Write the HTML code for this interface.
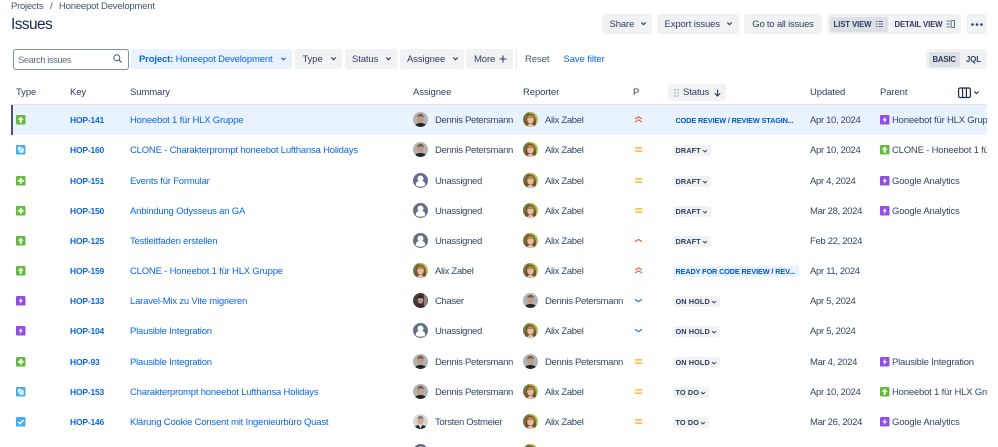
<!DOCTYPE html>
<html><head><meta charset="utf-8"><style>
html,body{margin:0;padding:0;background:#fff}
#p{position:relative;width:998px;height:447px;overflow:hidden;background:#fff;font-family:"Liberation Sans",sans-serif;font-size:9.5px;color:#344563}
#p *{box-sizing:border-box}
.a{position:absolute;white-space:nowrap}
.btn{position:absolute;height:20px;background:#f1f2f4;border-radius:3px;color:#2c3e5d;line-height:21px;font-size:9.5px;white-space:nowrap;letter-spacing:-.12px}
.th{position:absolute;top:87px;line-height:12px;font-size:9.5px;color:#2c3e5d;letter-spacing:-.1px}
.r{position:absolute;left:12px;width:975px;height:30px}
.r>*{position:absolute}
.t{left:4px;top:10px;width:9.5px;height:9.5px}
.k{left:58px;top:9px;line-height:12px;font-size:8.5px;font-weight:bold;color:#0c66e4;white-space:nowrap;letter-spacing:-.2px}
.s{left:118px;top:10px;line-height:12px;color:#0c66e4;white-space:nowrap;font-size:9.5px;letter-spacing:-.2px}
.av1{left:401px;top:7px;width:15px;height:15px}
.n1{left:423px;top:10px;line-height:12px;white-space:nowrap;letter-spacing:-.32px}
.av2{left:511px;top:7px;width:15px;height:15px}
.n2{left:533px;top:10px;line-height:12px;white-space:nowrap;letter-spacing:-.32px}
.pr{left:622px;top:10px;width:9px;height:9px}
.st{left:661px;top:10px;height:11px;line-height:11.5px;padding:0 2.5px;background:#f1f2f4;border-radius:2px;font-size:7.3px;font-weight:bold;color:#2c3e5d;white-space:nowrap;letter-spacing:.1px}
.st svg{display:inline-block;width:6px;height:6px;margin-left:1.5px;vertical-align:-.5px}
.st.b{background:#e9f2ff;color:#0055cc;width:126px;letter-spacing:-.13px}
.u{left:798px;top:10px;line-height:12px;white-space:nowrap;letter-spacing:-.33px}
.pi{left:868px;top:10px;width:9.5px;height:9.5px}
.pt{left:880px;top:10px;width:95px;overflow:hidden;line-height:12px;white-space:nowrap;letter-spacing:-.2px}
</style></head><body><div id="p">
<svg width="0" height="0" style="position:absolute">
<defs>
<symbol id="story" viewBox="0 0 9 9"><rect width="9" height="9" rx="1.2" fill="#63ba3c"/><path d="M4.5 1.5 7.400 4.500H5.500V7.400H3.500V4.500H1.600z" fill="#fff"/></symbol>
<symbol id="plus" viewBox="0 0 9 9"><rect width="9" height="9" rx="1.2" fill="#63ba3c"/><path d="M3.600 1.800h1.800v1.800h1.800v1.800H5.400v1.800H3.600V5.400H1.800V3.600h1.800z" fill="#fff"/></symbol>
<symbol id="clone" viewBox="0 0 9 9"><rect width="9" height="9" rx="1.2" fill="#4bade8"/><path d="M1.800 1.800h3.200v1.200h2.200V7.200H3.200V5.200H1.800z" fill="#fff"/><path d="M3.400 3.200h2.200v2.200H3.400z" fill="#a6d8f5"/></symbol>
<symbol id="epic" viewBox="0 0 9 9"><rect width="9" height="9" rx="1.2" fill="#904ee2"/><path d="M5.400 1.300 2.300 5h2L3.600 7.700 6.700 4H4.700z" fill="#fff"/></symbol>
<symbol id="task" viewBox="0 0 9 9"><rect width="9" height="9" rx="1.2" fill="#4bade8"/><path d="M2 4.600 3.800 6.400 7.100 2.800" fill="none" stroke="#fff" stroke-width="1.4"/></symbol>
<symbol id="high2" viewBox="0 0 9 9"><path d="M1 4 4.500 1.800 8 4M1 7 4.500 4.800 8 7" fill="none" stroke="#f15b3a" stroke-width="1.1"/></symbol>
<symbol id="high" viewBox="0 0 9 9"><path d="M1 5.600 4.500 3.400 8 5.600" fill="none" stroke="#f15b3a" stroke-width="1.2"/></symbol>
<symbol id="med" viewBox="0 0 9 9"><path d="M1.200 2.900h7M1.200 6.100h7" stroke="#ffab00" stroke-width="1.2"/></symbol>
<symbol id="low" viewBox="0 0 9 9"><path d="M1 3.400 4.500 5.600 8 3.400" fill="none" stroke="#2684ff" stroke-width="1.3"/></symbol>
<symbol id="dn" viewBox="0 0 8 8"><path d="M1.500 2.800 4 5.300 6.500 2.800" fill="none" stroke="#2c3e5d" stroke-width="1.300"/></symbol>
<clipPath id="c"><circle cx="7.500" cy="7.500" r="7.500"/></clipPath>
<symbol id="dp" viewBox="0 0 15 15"><g clip-path="url(#c)"><rect width="15" height="15" fill="#b2b2b0"/><path d="M1.500 15c.5-3 3-4 6-4s5.500 1 6 4z" fill="#20242c"/><ellipse cx="7.500" cy="6.500" rx="3.300" ry="4.200" fill="#c39a85"/><path d="M4.300 5.200C4.300 2.800 6 2 7.800 2s2.900 1.200 2.900 3.200C9.500 4 6 4.100 4.300 5.200z" fill="#6b5c52"/></g></symbol>
<symbol id="az" viewBox="0 0 15 15"><g clip-path="url(#c)"><rect width="15" height="15" fill="#a7bd45"/><path d="M0 0h6v15H0z" fill="#6f7a45"/><path d="M2.200 15C1.200 8 3 1.500 7.500 1.500S13.800 8 12.800 15z" fill="#7a5530"/><ellipse cx="7.500" cy="7.500" rx="3.300" ry="4.200" fill="#e6bda3"/><path d="M4.300 7C4.300 4 6 3 8 3s3 1.800 3 3.700C9 6 6.500 5.500 4.300 7z" fill="#b48a52"/><path d="M4 15c.6-2.500 2-3 3.500-3s3 .5 3.500 3z" fill="#e0c3ad"/></g></symbol>
<symbol id="ua" viewBox="0 0 15 15"><circle cx="7.500" cy="7.500" r="7.500" fill="#626f86"/><circle cx="7.500" cy="5.500" r="3" fill="#fff"/><path d="M2.800 12.300c0-3 1.500-4.200 3-4.200h3.400c1.500 0 3 1.200 3 4.200-1.200 1.100-2.900 1.500-4.700 1.500s-3.500-.4-4.700-1.500z" fill="#fff"/></symbol>
<symbol id="ch" viewBox="0 0 15 15"><g clip-path="url(#c)"><rect width="15" height="15" fill="#4a3a38"/><rect x="11" width="4" height="15" fill="#8d7f7c"/><path d="M3 15c0-3 2-4 4.500-4s4.500 1 4.500 4z" fill="#372d2e"/><ellipse cx="7.500" cy="6.800" rx="2.800" ry="3.800" fill="#b89488"/><path d="M4.500 6C4.500 3 6 2 7.500 2s3 1 3 4C9 4.500 6 4.500 4.500 6z" fill="#2e2323"/></g></symbol>
<symbol id="to" viewBox="0 0 15 15"><g clip-path="url(#c)"><rect width="15" height="15" fill="#d6d6d5"/><path d="M1 15c.5-3 3-4 6.500-4s6 1 6.500 4z" fill="#23262e"/><path d="M6 11h3l-1.500 3.500z" fill="#fff"/><ellipse cx="7.500" cy="6.500" rx="3" ry="4" fill="#d2a690"/><path d="M4.500 5.300C4.500 2.800 6 2 7.600 2s3 1 2.900 3.300C9 4 6 4.200 4.500 5.300z" fill="#7d7572"/></g></symbol>
</defs>
</svg>

<div class="a" style="left:11px;top:1px;line-height:12px;font-size:9.500px;color:#44546f;letter-spacing:-.25px">Projects</div>
<div class="a" style="left:50px;top:1px;line-height:12px;color:#44546f">/</div>
<div class="a" style="left:59px;top:1px;line-height:12px;color:#44546f;letter-spacing:-.2px">Honeepot Development</div>
<div class="a" style="left:11px;top:15px;line-height:20px;font-size:15.500px;color:#172b4d;letter-spacing:-.6px">Issues</div>

<div class="btn" style="left:602px;top:14px;width:50px;padding-left:7.500px">Share<svg class="a" style="left:37.500px;top:6px;width:7px;height:7px"><use href="#dn"/></svg></div>
<div class="btn" style="left:657px;top:14px;width:82px;padding-left:7.500px">Export issues<svg class="a" style="left:69px;top:6px;width:7px;height:7px"><use href="#dn"/></svg></div>
<div class="btn" style="left:744px;top:14px;width:78px;text-align:center;letter-spacing:-.22px">Go to all issues</div>
<div class="btn" style="left:827px;top:14px;width:134px"></div>
<div class="a" style="left:830px;top:16.500px;width:58px;height:15px;background:#dcdfe4;border-radius:2px"></div>
<div class="a" style="left:833.500px;top:18.500px;line-height:12px;font-size:7.800px;font-weight:bold;color:#2c3e5d;letter-spacing:-.12px">LIST VIEW</div>
<svg class="a" style="left:876px;top:21px" width="7" height="6"><path d="M0 .5h1.500M2.500 .5H7M0 3h1.500M2.500 3H7M0 5.500h1.500M2.500 5.500H7" stroke="#5e6c84" stroke-width="1"/></svg>
<div class="a" style="left:894.500px;top:18.500px;line-height:12px;font-size:7.800px;font-weight:bold;color:#2c3e5d;letter-spacing:-.15px">DETAIL VIEW</div>
<svg class="a" style="left:946px;top:20px" width="9" height="8"><path d="M.5 1h3M.5 4h3M.5 7h3" stroke="#5e6c84"/><rect x="5" y=".5" width="3.500" height="7" rx="1" fill="none" stroke="#5e6c84"/></svg>
<div class="btn" style="left:966px;top:14px;width:21px"><svg class="a" style="left:4.500px;top:8.500px" width="12" height="3"><circle cx="1.500" cy="1.500" r="1.300" fill="#2c3e5d"/><circle cx="6" cy="1.500" r="1.300" fill="#2c3e5d"/><circle cx="10.500" cy="1.500" r="1.300" fill="#2c3e5d"/></svg></div>

<div class="a" style="left:13px;top:49px;width:116px;height:21px;border:1px solid #8590a2;border-radius:3px;background:#fff;line-height:21px;padding-left:4px;color:#626f86;font-size:9.500px;letter-spacing:-.5px">Search issues</div>
<svg class="a" style="left:113px;top:54px" width="9" height="9" viewBox="0 0 9 9"><circle cx="3.800" cy="3.800" r="3" fill="none" stroke="#44546f" stroke-width="1"/><path d="M6 6l2.500 2.500" stroke="#44546f" stroke-width="1.100"/></svg>
<div class="btn" style="left:131px;top:49px;width:161px;background:#e9f2ff;color:#0c66e4;padding-left:8px;letter-spacing:-.15px"><b>Project:</b> Honeepot Development<svg class="a" style="left:149px;top:6px;width:7px;height:7px"><path d="M1.500 2.800 3.500 4.800 5.500 2.800" fill="none" stroke="#0c66e4" stroke-width="1.100"/></svg></div>
<div class="btn" style="left:295px;top:49px;width:47px;padding-left:7.500px">Type<svg class="a" style="left:34.500px;top:6px;width:7px;height:7px"><use href="#dn"/></svg></div>
<div class="btn" style="left:345px;top:49px;width:52px;padding-left:7px">Status<svg class="a" style="left:39.500px;top:6px;width:7px;height:7px"><use href="#dn"/></svg></div>
<div class="btn" style="left:400px;top:49px;width:64px;padding-left:7px">Assignee<svg class="a" style="left:51.500px;top:6px;width:7px;height:7px"><use href="#dn"/></svg></div>
<div class="btn" style="left:466px;top:49px;width:47px;padding-left:8px">More<svg class="a" style="left:33px;top:6px;width:8px;height:8px"><path d="M4 .5v7M.5 4h7" stroke="#2c3e5d" stroke-width="1.100"/></svg></div>
<div class="a" style="left:516px;top:49px;width:1px;height:20px;background:#ebecf0"></div>
<div class="a" style="left:525px;top:53.500px;line-height:12px;color:#44546f;letter-spacing:-.1px">Reset</div>
<div class="a" style="left:563.500px;top:53.500px;line-height:12px;color:#0c66e4;letter-spacing:-.1px">Save filter</div>
<div class="btn" style="left:926px;top:49px;width:61px"></div>
<div class="a" style="left:929px;top:52px;width:31px;height:15px;background:#dcdfe4;border-radius:2px"></div>
<div class="a" style="left:932.500px;top:53.500px;line-height:12px;font-size:7.800px;font-weight:bold;color:#2c3e5d;letter-spacing:-.2px">BASIC</div>
<div class="a" style="left:966px;top:53.500px;line-height:12px;font-size:7.800px;font-weight:bold;color:#2c3e5d;letter-spacing:-.1px">JQL</div>

<div class="th" style="left:16px">Type</div>
<div class="th" style="left:70px">Key</div>
<div class="th" style="left:130px">Summary</div>
<div class="th" style="left:413px">Assignee</div>
<div class="th" style="left:523px">Reporter</div>
<div class="th" style="left:633px">P</div>
<div class="a" style="left:668px;top:84px;width:58px;height:17px;background:#f1f2f4;border-radius:3px"></div>
<svg class="a" style="left:673.500px;top:89px" width="5" height="8"><g fill="#8590a2"><circle cx="1" cy="1" r=".7"/><circle cx="4" cy="1" r=".7"/><circle cx="1" cy="4" r=".7"/><circle cx="4" cy="4" r=".7"/><circle cx="1" cy="7" r=".7"/><circle cx="4" cy="7" r=".7"/></g></svg>
<div class="th" style="left:683px">Status</div>
<svg class="a" style="left:714px;top:89px" width="7" height="8"><path d="M3.500 .5v6.500M.8 4.300 3.500 7 6.200 4.300" fill="none" stroke="#2c3e5d" stroke-width="1.100"/></svg>
<div class="th" style="left:810px">Updated</div>
<div class="th" style="left:880px">Parent</div>
<svg class="a" style="left:958px;top:87px" width="13" height="12"><rect x=".6" y="1" width="11.800" height="9.500" rx="1.500" fill="none" stroke="#172b4d" stroke-width="1.200"/><path d="M4.600 1v9.500M8.400 1v9.500" stroke="#172b4d" stroke-width="1.200"/></svg>
<svg class="a" style="left:973px;top:89px;width:7px;height:7px"><use href="#dn"/></svg>

<div class="a" style="left:11px;top:104px;width:976px;height:1px;background:#dfe1e6"></div>
<div class="a" style="left:12px;top:105px;width:975px;height:30px;background:#e9f2ff"></div>
<div class="a" style="left:11px;top:105px;width:1.500px;height:30px;background:#44546f"></div>

<div class="r" style="top:105px"><svg class="t"><use href="#story"/></svg><div class="k">HOP-141</div><div class="s">Honeebot 1 für HLX Gruppe</div><svg class="av1"><use href="#dp"/></svg><div class="n1">Dennis Petersmann</div><svg class="av2"><use href="#az"/></svg><div class="n2">Alix Zabel</div><svg class="pr"><use href="#high2"/></svg><div class="st b" style="background:transparent">CODE REVIEW / REVIEW STAGIN...</div><div class="u">Apr 10, 2024</div><svg class="pi"><use href="#epic"/></svg><div class="pt">Honeebot für HLX Gruppe</div></div>

<div class="r" style="top:135px"><svg class="t"><use href="#clone"/></svg><div class="k">HOP-160</div><div class="s">CLONE - Charakterprompt honeebot Lufthansa Holidays</div><svg class="av1"><use href="#dp"/></svg><div class="n1">Dennis Petersmann</div><svg class="av2"><use href="#az"/></svg><div class="n2">Alix Zabel</div><svg class="pr"><use href="#med"/></svg><div class="st">DRAFT<svg><use href="#dn"/></svg></div><div class="u">Apr 10, 2024</div><svg class="pi"><use href="#story"/></svg><div class="pt">CLONE - Honeebot 1 für HLX Gruppe</div></div>

<div class="r" style="top:166px"><svg class="t"><use href="#plus"/></svg><div class="k">HOP-151</div><div class="s">Events für Formular</div><svg class="av1"><use href="#ua"/></svg><div class="n1">Unassigned</div><svg class="av2"><use href="#az"/></svg><div class="n2">Alix Zabel</div><svg class="pr"><use href="#med"/></svg><div class="st">DRAFT<svg><use href="#dn"/></svg></div><div class="u">Apr 4, 2024</div><svg class="pi"><use href="#epic"/></svg><div class="pt">Google Analytics</div></div>

<div class="r" style="top:196px"><svg class="t"><use href="#plus"/></svg><div class="k">HOP-150</div><div class="s">Anbindung Odysseus an GA</div><svg class="av1"><use href="#ua"/></svg><div class="n1">Unassigned</div><svg class="av2"><use href="#az"/></svg><div class="n2">Alix Zabel</div><svg class="pr"><use href="#med"/></svg><div class="st">DRAFT<svg><use href="#dn"/></svg></div><div class="u">Mar 28, 2024</div><svg class="pi"><use href="#epic"/></svg><div class="pt">Google Analytics</div></div>

<div class="r" style="top:226px"><svg class="t"><use href="#story"/></svg><div class="k">HOP-125</div><div class="s">Testleitfaden erstellen</div><svg class="av1"><use href="#ua"/></svg><div class="n1">Unassigned</div><svg class="av2"><use href="#az"/></svg><div class="n2">Alix Zabel</div><svg class="pr"><use href="#high"/></svg><div class="st">DRAFT<svg><use href="#dn"/></svg></div><div class="u">Feb 22, 2024</div></div>

<div class="r" style="top:256px"><svg class="t"><use href="#story"/></svg><div class="k">HOP-159</div><div class="s">CLONE - Honeebot 1 für HLX Gruppe</div><svg class="av1"><use href="#az"/></svg><div class="n1">Alix Zabel</div><svg class="av2"><use href="#az"/></svg><div class="n2">Alix Zabel</div><svg class="pr"><use href="#high2"/></svg><div class="st b">READY FOR CODE REVIEW / REV...</div><div class="u">Apr 11, 2024</div></div>

<div class="r" style="top:286px"><svg class="t"><use href="#epic"/></svg><div class="k">HOP-133</div><div class="s">Laravel-Mix zu Vite migrieren</div><svg class="av1"><use href="#ch"/></svg><div class="n1">Chaser</div><svg class="av2"><use href="#dp"/></svg><div class="n2">Dennis Petersmann</div><svg class="pr"><use href="#low"/></svg><div class="st">ON HOLD<svg><use href="#dn"/></svg></div><div class="u">Apr 5, 2024</div></div>

<div class="r" style="top:316px"><svg class="t"><use href="#epic"/></svg><div class="k">HOP-104</div><div class="s">Plausible Integration</div><svg class="av1"><use href="#ua"/></svg><div class="n1">Unassigned</div><svg class="av2"><use href="#az"/></svg><div class="n2">Alix Zabel</div><svg class="pr"><use href="#low"/></svg><div class="st">ON HOLD<svg><use href="#dn"/></svg></div><div class="u">Apr 5, 2024</div></div>

<div class="r" style="top:347px"><svg class="t"><use href="#plus"/></svg><div class="k">HOP-93</div><div class="s">Plausible Integration</div><svg class="av1"><use href="#dp"/></svg><div class="n1">Dennis Petersmann</div><svg class="av2"><use href="#dp"/></svg><div class="n2">Dennis Petersmann</div><svg class="pr"><use href="#med"/></svg><div class="st">ON HOLD<svg><use href="#dn"/></svg></div><div class="u">Mar 4, 2024</div><svg class="pi"><use href="#epic"/></svg><div class="pt">Plausible Integration</div></div>

<div class="r" style="top:377px"><svg class="t"><use href="#clone"/></svg><div class="k">HOP-153</div><div class="s">Charakterprompt honeebot Lufthansa Holidays</div><svg class="av1"><use href="#dp"/></svg><div class="n1">Dennis Petersmann</div><svg class="av2"><use href="#az"/></svg><div class="n2">Alix Zabel</div><svg class="pr"><use href="#med"/></svg><div class="st">TO DO<svg><use href="#dn"/></svg></div><div class="u">Apr 10, 2024</div><svg class="pi"><use href="#story"/></svg><div class="pt">Honeebot 1 für HLX Gruppe</div></div>

<div class="r" style="top:407px"><svg class="t"><use href="#task"/></svg><div class="k">HOP-146</div><div class="s">Klärung Cookie Consent mit Ingenieurbüro Quast</div><svg class="av1"><use href="#to"/></svg><div class="n1">Torsten Ostmeier</div><svg class="av2"><use href="#az"/></svg><div class="n2">Alix Zabel</div><svg class="pr"><use href="#med"/></svg><div class="st">TO DO<svg><use href="#dn"/></svg></div><div class="u">Mar 26, 2024</div><svg class="pi"><use href="#epic"/></svg><div class="pt">Google Analytics</div></div>

<div class="r" style="top:437px"><svg class="av1"><use href="#ua"/></svg><svg class="av2"><use href="#az"/></svg></div>
</div></body></html>
